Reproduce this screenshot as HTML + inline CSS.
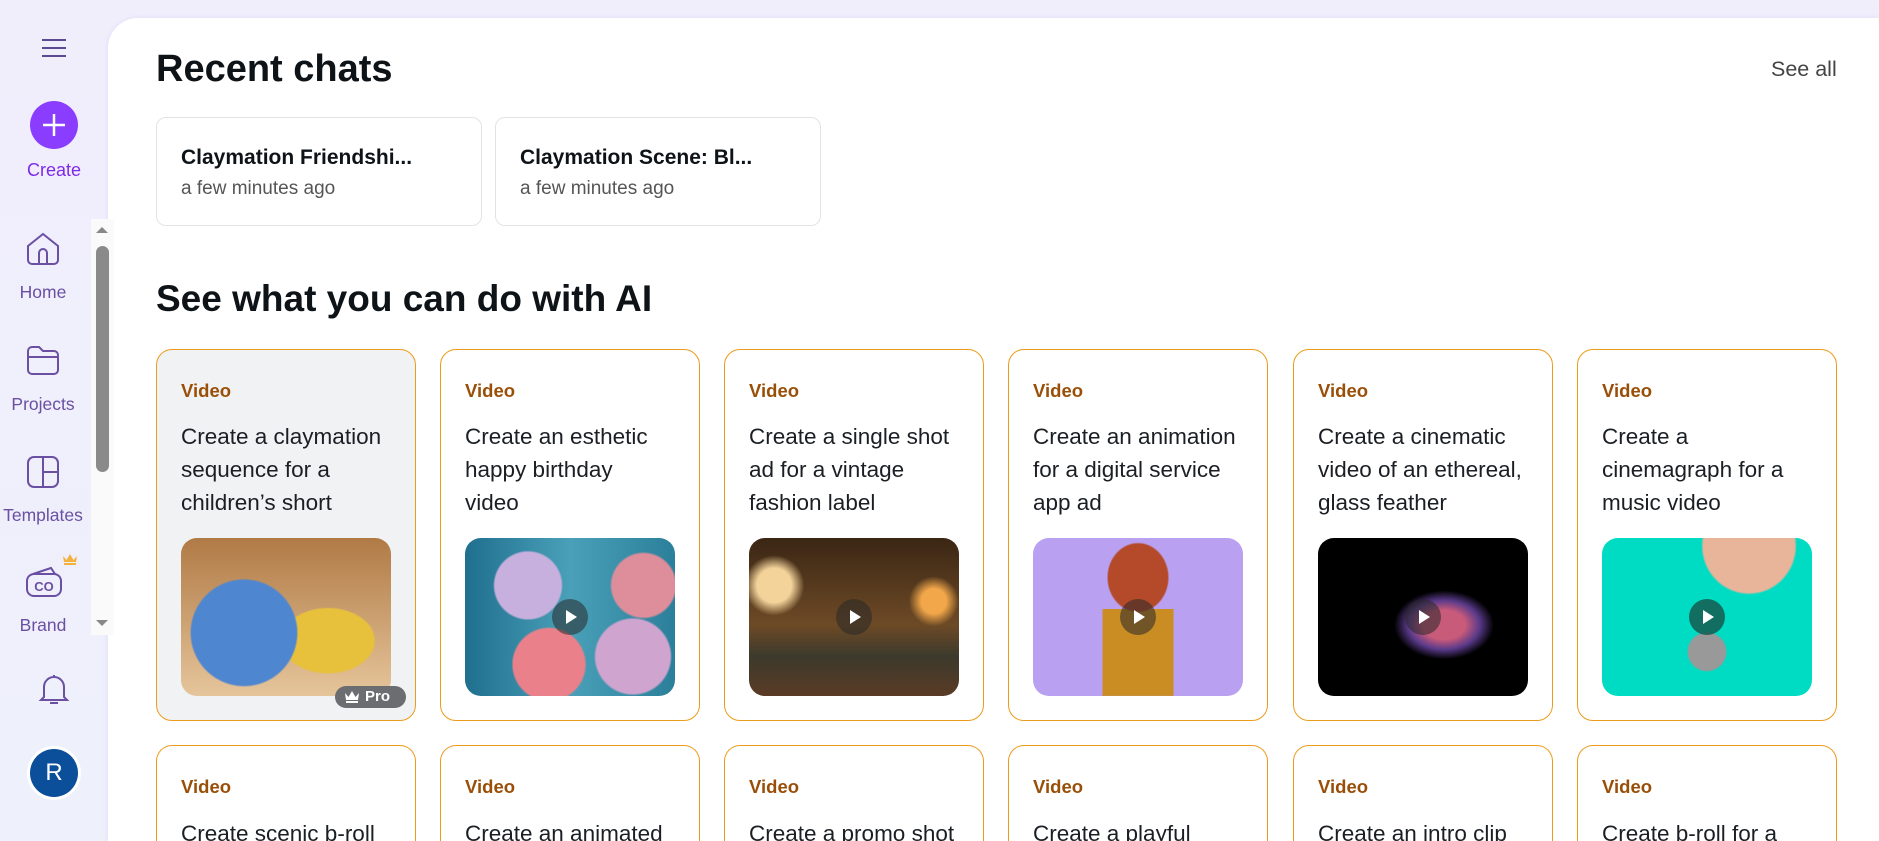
<!DOCTYPE html>
<html><head><meta charset="utf-8"><style>
*{box-sizing:border-box;margin:0;padding:0}
html,body{width:1879px;height:841px;overflow:hidden}
body{background:linear-gradient(180deg,#f1eefc,#eef0fb);font-family:"Liberation Sans",sans-serif;position:relative}
#wrap{position:absolute;left:0;top:0;width:1879px;height:841px;overflow:hidden}
.abs{position:absolute}
.nav{position:absolute;left:0;width:108px;text-align:center;color:#6a4fa3;font-size:17.5px}
.panel{position:absolute;left:108px;top:18px;width:1771px;height:823px;background:#fff;border-radius:30px 0 0 0;box-shadow:0 0 6px rgba(120,100,200,.12)}
h1{position:absolute;font-size:38px;font-weight:bold;color:#0e1318;white-space:nowrap}
.chat{position:absolute;top:117px;width:326px;height:109px;border:1px solid #e2e3e6;border-radius:10px;padding:28px 0 0 24px}
.chat b{display:block;font-size:21px;color:#0e1318;white-space:nowrap}
.chat span{display:block;font-size:19px;color:#555;margin-top:8px}
.card{position:absolute;width:260px;height:372px;border:1px solid #ec9c1c;border-radius:16px}
.card.r2{height:96px;border-bottom:none;border-radius:16px 16px 0 0}
.card .v{position:absolute;left:24px;top:30px;font-size:18.5px;font-weight:bold;color:#9a4f08}
.card .t{position:absolute;left:24px;top:70px;font-size:22.5px;line-height:33px;color:#1b1f24;white-space:nowrap}
.card .im{position:absolute;left:24px;top:188px;width:210px;height:158px;border-radius:16px;overflow:hidden}
.play{position:absolute;left:87px;top:61px;width:36px;height:36px;border-radius:50%;background:rgba(40,40,40,.55)}
.play:after{content:"";position:absolute;left:14px;top:11px;border-left:11px solid #fff;border-top:7px solid transparent;border-bottom:7px solid transparent}
</style></head><body><div id="wrap">
<svg class="abs" style="left:41px;top:38px" width="26" height="20"><g stroke="#5b4a8f" stroke-width="2"><line x1="1" y1="2" x2="25" y2="2"/><line x1="1" y1="10" x2="25" y2="10"/><line x1="1" y1="18" x2="25" y2="18"/></g></svg>
<div class="abs" style="left:30px;top:101px;width:48px;height:48px;border-radius:50%;background:#8b3dff"></div>
<svg class="abs" style="left:42px;top:113px" width="24" height="24"><g stroke="#fff" stroke-width="2.5"><line x1="12" y1="1" x2="12" y2="23"/><line x1="1" y1="12" x2="23" y2="12"/></g></svg>
<div class="nav" style="top:160px;color:#7d2ae8;font-size:18px">Create</div>
<svg class="abs" style="left:25px;top:231px" width="36" height="36" fill="none" stroke="#6a4fa3" stroke-width="2"><path d="M3 15 L18 3 L33 15 V29 a4 4 0 0 1 -4 4 H7 a4 4 0 0 1 -4 -4Z"/><path d="M14 33 V22 a4 4 0 0 1 8 0 V33"/></svg>
<div class="nav" style="top:282px;width:86px">Home</div>
<svg class="abs" style="left:25px;top:343px" width="36" height="34" fill="none" stroke="#6a4fa3" stroke-width="2"><path d="M3 8 a4 4 0 0 1 4 -4 H14 l4 4 H29 a4 4 0 0 1 4 4 V27 a4 4 0 0 1 -4 4 H7 a4 4 0 0 1 -4 -4Z M3 14 H33"/></svg>
<div class="nav" style="top:394px;width:86px">Projects</div>
<svg class="abs" style="left:25px;top:454px" width="36" height="36" fill="none" stroke="#6a4fa3" stroke-width="2"><rect x="3" y="3" width="30" height="30" rx="6"/><path d="M18 3 V33 M18 18 H33"/></svg>
<div class="nav" style="top:505px;width:86px">Templates</div>
<svg class="abs" style="left:25px;top:564px" width="38" height="36" fill="none" stroke="#6a4fa3" stroke-width="2"><path d="M8 10 L26 4 L30 10"/><rect x="2" y="10" width="34" height="22" rx="7"/><text x="19" y="27" font-size="13" font-weight="bold" fill="#6a4fa3" stroke="none" text-anchor="middle" font-family="Liberation Sans">CO</text></svg>
<svg class="abs" style="left:62px;top:553px" width="16" height="12"><path d="M1 3 L4.5 7 L8 1 L11.5 7 L15 3 L14 9 H2Z M2 10 H14 V12 H2Z" fill="#f4b13b"/></svg>
<div class="nav" style="top:615px;width:86px">Brand</div>
<svg class="abs" style="left:38px;top:672px" width="32" height="34" fill="none" stroke="#6a4fa3" stroke-width="2"><path d="M16 3 V5 M6 25 V15 a10 10 0 0 1 20 0 V25 l3 3 H3Z M12 31 h8"/></svg>
<div class="abs" style="left:27px;top:746px;width:54px;height:54px;border-radius:50%;background:#fff"></div>
<div class="abs" style="left:30px;top:749px;width:48px;height:48px;border-radius:50%;background:#0b4e9a;color:#fff;font-size:24px;line-height:48px;text-align:center">R</div>
<div class="panel"></div>
<div class="abs" style="left:91px;top:219px;width:23px;height:416px;background:#fafafa"></div>
<div class="abs" style="left:96px;top:246px;width:13px;height:226px;border-radius:7px;background:#8a8a8a"></div>
<div class="abs" style="left:96px;top:227px;border-bottom:6px solid #888;border-left:6px solid transparent;border-right:6px solid transparent"></div>
<div class="abs" style="left:96px;top:620px;border-top:6px solid #888;border-left:6px solid transparent;border-right:6px solid transparent"></div>
<h1 style="left:156px;top:48px">Recent chats</h1>
<div class="abs" style="left:1771px;top:57px;font-size:21.5px;color:#444">See all</div>
<div class="chat" style="left:156px"><b>Claymation Friendshi...</b><span>a few minutes ago</span></div>
<div class="chat" style="left:495px"><b>Claymation Scene: Bl...</b><span>a few minutes ago</span></div>
<h1 style="left:156px;top:278px;font-size:37px">See what you can do with AI</h1>

<div class="card" style="left:156px;top:349px;background:#f1f2f4"><div class="v">Video</div><div class="t">Create a claymation<br>sequence for a<br>children’s short</div>
<div class="im" style="background:radial-gradient(circle at 30% 60%,#4f86d0 0 30%,transparent 31%),radial-gradient(ellipse at 70% 65%,#e7c13c 0 22%,transparent 23%),linear-gradient(#b07a45,#e6c59b)"></div>
<div class="abs" style="left:178px;top:336px;width:71px;height:22px;border-radius:11px;background:#6b6d70;color:#fff;font-size:15px;font-weight:bold;line-height:22px;padding-left:30px">Pro<svg class="abs" style="left:9px;top:5px" width="16" height="12"><path d="M1 2 L4.5 6 L8 0 L11.5 6 L15 2 L14 9 H2Z M2 10 H14 V12 H2Z" fill="#fff"/></svg></div></div>

<div class="card" style="left:440px;top:349px"><div class="v">Video</div><div class="t">Create an esthetic<br>happy birthday<br>video</div>
<div class="im" style="background:radial-gradient(circle at 30% 30%,#c7b0dd 0 18%,transparent 19%),radial-gradient(circle at 40% 80%,#e9808a 0 20%,transparent 21%),radial-gradient(circle at 85% 30%,#dd8e9a 0 15%,transparent 16%),radial-gradient(circle at 80% 75%,#cfa5d0 0 18%,transparent 19%),linear-gradient(90deg,#1f6f8f,#4aa0b8,#2b7f9a)"><div class="play"></div></div></div>

<div class="card" style="left:724px;top:349px"><div class="v">Video</div><div class="t">Create a single shot<br>ad for a vintage<br>fashion label</div>
<div class="im" style="background:radial-gradient(circle at 12% 30%,#f3d39a 0 8%,transparent 14%),radial-gradient(circle at 88% 40%,#f2a74a 0 6%,transparent 12%),linear-gradient(#3a2614,#6d4a26 55%,#3c3a2c 75%,#5a3b25)"><div class="play"></div></div></div>

<div class="card" style="left:1008px;top:349px"><div class="v">Video</div><div class="t">Create an animation<br>for a digital service<br>app ad</div>
<div class="im" style="background:radial-gradient(ellipse at 50% 25%,#b44a2a 0 20%,transparent 21%),linear-gradient(90deg,transparent 33%,#c98d24 33% 67%,transparent 67%) bottom/100% 55% no-repeat,#b9a0f0"><div class="play"></div></div></div>

<div class="card" style="left:1293px;top:349px"><div class="v">Video</div><div class="t">Create a cinematic<br>video of an ethereal,<br>glass feather</div>
<div class="im" style="background:radial-gradient(ellipse at 60% 55%,#c85a7a 0 12%,#5a3a8a 20%,transparent 28%),#000"><div class="play"></div></div></div>

<div class="card" style="left:1577px;top:349px"><div class="v">Video</div><div class="t">Create a<br>cinemagraph for a<br>music video</div>
<div class="im" style="background:radial-gradient(circle at 50% 72%,#999 0 12%,transparent 13%),radial-gradient(ellipse at 70% 5%,#e8b49a 0 22%,transparent 23%),#00dcc4"><div class="play" style="background:rgba(20,90,80,.85)"></div></div></div>

<div class="card r2" style="left:156px;top:745px"><div class="v">Video</div><div class="t" style="top:71px;height:25px;overflow:hidden">Create scenic b-roll</div></div>
<div class="card r2" style="left:440px;top:745px"><div class="v">Video</div><div class="t" style="top:71px;height:25px;overflow:hidden">Create an animated</div></div>
<div class="card r2" style="left:724px;top:745px"><div class="v">Video</div><div class="t" style="top:71px;height:25px;overflow:hidden">Create a promo shot</div></div>
<div class="card r2" style="left:1008px;top:745px"><div class="v">Video</div><div class="t" style="top:71px;height:25px;overflow:hidden">Create a playful</div></div>
<div class="card r2" style="left:1293px;top:745px"><div class="v">Video</div><div class="t" style="top:71px;height:25px;overflow:hidden">Create an intro clip</div></div>
<div class="card r2" style="left:1577px;top:745px"><div class="v">Video</div><div class="t" style="top:71px;height:25px;overflow:hidden">Create b-roll for a</div></div>
</div></body></html>
